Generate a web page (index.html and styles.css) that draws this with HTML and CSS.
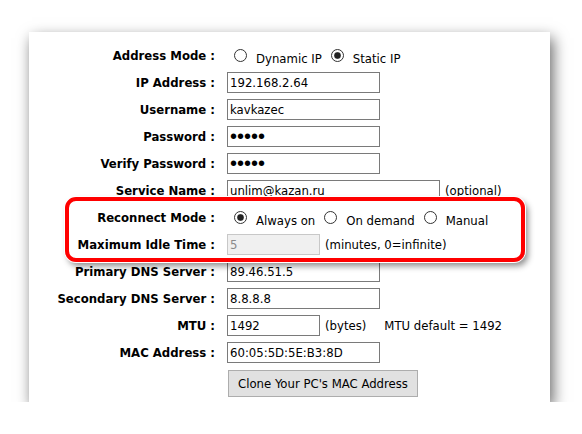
FILE: index.html
```html
<!DOCTYPE html>
<html>
<head>
<meta name="viewport" content="width=device-width, initial-scale=1">
<link rel="stylesheet" href="styles.css">
</head>
<body>
<div class="panel">
  <div class="row">
    <label class="lbl">Address Mode :</label>
    <label class="opt"><input type="radio" name="mode"><span>Dynamic IP</span></label>
    <label class="opt"><input type="radio" name="mode" checked><span>Static IP</span></label>
  </div>
  <div class="row">
    <label class="lbl" for="ip">IP Address :</label>
    <input type="text" id="ip" class="field" value="192.168.2.64">
  </div>
  <div class="row">
    <label class="lbl" for="user">Username :</label>
    <input type="text" id="user" class="field" value="kavkazec">
  </div>
  <div class="row">
    <label class="lbl" for="pass">Password :</label>
    <input type="password" id="pass" class="field secret" value="12345">
  </div>
  <div class="row">
    <label class="lbl" for="pass2">Verify Password :</label>
    <input type="password" id="pass2" class="field secret" value="12345">
  </div>
  <div class="row">
    <label class="lbl" for="service">Service Name :</label>
    <input type="text" id="service" class="field wide" value="unlim@kazan.ru">
    <span class="note">(optional)</span>
  </div>

  <div class="highlight">
    <div class="row">
      <label class="lbl">Reconnect Mode :</label>
      <label class="opt"><input type="radio" name="recon" checked><span>Always on</span></label>
      <label class="opt"><input type="radio" name="recon"><span>On demand</span></label>
      <label class="opt"><input type="radio" name="recon"><span>Manual</span></label>
    </div>
    <div class="row">
      <label class="lbl" for="idle">Maximum Idle Time :</label>
      <input type="text" id="idle" class="field short" value="5" disabled>
      <span class="note">(minutes, 0=infinite)</span>
    </div>
  </div>

  <div class="row">
    <label class="lbl" for="dns1">Primary DNS Server :</label>
    <input type="text" id="dns1" class="field" value="89.46.51.5">
  </div>
  <div class="row">
    <label class="lbl" for="dns2">Secondary DNS Server :</label>
    <input type="text" id="dns2" class="field" value="8.8.8.8">
  </div>
  <div class="row">
    <label class="lbl" for="mtu">MTU :</label>
    <input type="text" id="mtu" class="field short" value="1492">
    <span class="note">(bytes)</span>
    <span class="note default">MTU default = 1492</span>
  </div>
  <div class="row">
    <label class="lbl" for="mac">MAC Address :</label>
    <input type="text" id="mac" class="field" value="60:05:5D:5E:B3:8D">
  </div>
  <div class="row btnrow">
    <span class="lbl"></span>
    <input type="button" class="clone" value="Clone Your PC's MAC Address">
  </div>
</div>
</body>
</html>
```

FILE: styles.css
```css
* {box-sizing: border-box;}

body {
  margin: 0;
  background: #fff;
  font-family: "DejaVu Sans Condensed", "DejaVu Sans", sans-serif;
  font-size: 13px;
  color: #000;
}

.panel {
  margin: 32px 0 0 29px;
  width: 521px;
  height: 370px;
  padding-top: 10px;
  background: #fff;
  box-shadow: 3px 6px 14px rgba(0, 0, 0, 0.6);
}

.row {
  display: flex;
  align-items: center;
  height: 27px;
}

.lbl {
  width: 186px;
  margin-right: 12px;
  text-align: right;
  font-weight: bold;
  white-space: nowrap;
}

.field {
  width: 153px;
  height: 21px;
  margin: 0;
  padding: 0 2px;
  border: 1px solid #7a7a7a;
  border-radius: 0;
  font-family: inherit;
  font-size: 13px;
  color: #000;
  background: #fff;
}

.field.secret {
  font-family: "Liberation Sans", sans-serif;
  font-size: 20px;
  letter-spacing: 0;
  line-height: 19px;
}

.field.wide {
  width: 213px;
}

.field.short {
  width: 93px;
}

.field:disabled {
  background: #f0f0f0;
  border-color: #c8c8c8;
  color: #8a8a8a;
}

.note {
  margin-left: 5px;
}

.note.default {
  margin-left: 18px;
}

.opt {
  display: flex;
  align-items: center;
}

.opt input {
  -webkit-appearance: none;
  appearance: none;
  width: 13px;
  height: 13px;
  margin: 0 9px 0 7px;
  border: 1px solid #333;
  border-radius: 50%;
  background: #fff;
}

.opt input:checked {
  background: radial-gradient(circle, #222 0, #222 2.8px, #888 3.3px, #fff 4px);
}

.opt span {
  margin-top: 6px;
  margin-right: 2px;
}

.highlight {
  position: relative;
}

.highlight::after {
  content: "";
  position: absolute;
  top: -7px;
  bottom: -4px;
  left: 36px;
  width: 452px;
  border: 4px solid #f00;
  border-radius: 11px;
  box-shadow: 0 0 0 1px #fff, 3px 4px 6px rgba(0, 0, 0, 0.45);
}

.btnrow {
  height: 31px;
  align-items: flex-end;
}

.clone {
  width: 190px;
  height: 27px;
  margin: 0 0 0 1px;
  background: #e1e1e1;
  border: 1px solid #adadad;
  font-family: inherit;
  font-size: 13px;
  color: #000;
}
```
